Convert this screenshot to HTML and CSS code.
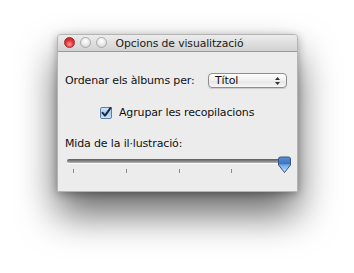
FILE: index.html
```html
<!DOCTYPE html>
<html>
<head>
<meta charset="utf-8">
<link rel="stylesheet" href="styles.css">
</head>
<body>
<div class="window">
  <div class="titlebar">
    <div class="lights">
      <span class="light red"></span>
      <span class="light"></span>
      <span class="light"></span>
    </div>
    <div class="title">Opcions de visualització</div>
  </div>
  <div class="content">
    <div class="row sort">
      <span class="label">Ordenar els àlbums per:</span>
      <div class="popup">
        <span>Títol</span>
        <svg class="arrows" width="5" height="8" viewBox="0 0 5 8"><path d="M2.5 0 L5 3 H0 Z M0 5 H5 L2.5 8 Z" fill="#333"/></svg>
      </div>
    </div>
    <div class="row check">
      <svg class="checkbox" width="12" height="12" viewBox="0 0 12 12">
        <defs>
          <linearGradient id="cb" x1="0" y1="0" x2="0" y2="1">
            <stop offset="0" stop-color="#d6e8f8"/>
            <stop offset="0.5" stop-color="#a9cdee"/>
            <stop offset="1" stop-color="#cfe6fb"/>
          </linearGradient>
        </defs>
        <rect x="0.5" y="0.5" width="11" height="11" rx="1.5" fill="url(#cb)" stroke="#5b7fa8"/>
        <path d="M2.6 5.8 L5 8.6 L10.6 0.8" fill="none" stroke="#1b2a49" stroke-width="2" stroke-linecap="round" stroke-linejoin="round"/>
      </svg>
      <span class="label">Agrupar les recopilacions</span>
    </div>
    <div class="row size">
      <span class="label">Mida de la il·lustració:</span>
    </div>
    <div class="slider">
      <div class="track"></div>
      <svg class="knob" width="15" height="18" viewBox="0 0 15 18">
        <defs>
          <linearGradient id="kb" x1="0" y1="0" x2="0" y2="1">
            <stop offset="0" stop-color="#5a8fd0"/>
            <stop offset="0.45" stop-color="#3b73c4"/>
            <stop offset="0.5" stop-color="#6aa5e6"/>
            <stop offset="1" stop-color="#c5e6ff"/>
          </linearGradient>
        </defs>
        <path d="M1.5 3 Q1.5 1 3.5 1 H11.5 Q13.5 1 13.5 3 V9 L7.5 16.5 L1.5 9 Z" fill="url(#kb)" stroke="#3a5680" stroke-width="1"/>
      </svg>
      <div class="ticks">
        <span></span><span></span><span></span><span></span><span></span>
      </div>
    </div>
  </div>
</div>
</body>
</html>
```
FILE: styles.css
```css
html, body {
  margin: 0;
  padding: 0;
  background: #ffffff;
}
body {
  width: 354px;
  height: 273px;
  overflow: hidden;
  font-family: "DejaVu Sans", "Liberation Sans", sans-serif;
  font-size: 11px;
  letter-spacing: -0.15px;
  color: #111;
}
.window {
  margin: 34px 0 0 57px;
  width: 241px;
  height: 158px;
  background: #ececec;
  box-sizing: border-box;
  border: 1px solid #b4b4b4;
  border-radius: 4px 4px 0 0;
  box-shadow: 0 22px 38px rgba(0,0,0,0.6), 0 2px 8px rgba(0,0,0,0.3);
  display: flex;
  flex-direction: column;
}
.titlebar {
  position: relative;
  height: 16px;
  background: linear-gradient(#ececec, #d2d2d2);
  border-bottom: 1px solid #9a9a9a;
  border-radius: 3px 3px 0 0;
  display: flex;
  align-items: center;
  justify-content: center;
}
.lights {
  position: absolute;
  left: 6px;
  top: 2px;
  display: flex;
  gap: 5px;
}
.light {
  width: 11px;
  height: 11px;
  border-radius: 50%;
  box-sizing: border-box;
  border: 1px solid #a8a8a8;
  background: radial-gradient(circle at 50% 35%, #ffffff 0%, #ececec 45%, #c9c9c9 100%);
}
.light.red {
  border-color: #9b2a2a;
  background: radial-gradient(circle at 50% 70%, #ff9e9e 0%, #e8383c 45%, #b11d22 100%);
}
.title {
  font-size: 10.8px;
  letter-spacing: -0.1px;
  color: #1a1a1a;
  margin-left: 4px;
}
.content {
  flex: 1;
  display: flex;
  flex-direction: column;
  padding: 0 10px 0 7px;
}
.row {
  display: flex;
  align-items: center;
}
.sort {
  margin-top: 21px;
  justify-content: space-between;
}
.popup {
  width: 79px;
  height: 15px;
  box-sizing: border-box;
  border: 1px solid #8e8e8e;
  border-radius: 4px;
  background: linear-gradient(#ffffff, #f0f0f0 50%, #e4e4e4 51%, #f6f6f6);
  display: flex;
  align-items: center;
  justify-content: space-between;
  padding: 0 6px 0 6px;
  box-shadow: 0 1px 1px rgba(0,0,0,0.15);
}
.check {
  margin-top: 18px;
  padding-left: 35px;
  gap: 7px;
}
.checkbox {
  display: block;
}
.size {
  margin-top: 18px;
}
.slider {
  position: relative;
  margin: 9px 0 0 2px;
  width: 221px;
}
.track {
  height: 4px;
  border-radius: 2px;
  background: linear-gradient(#5c5c5c, #8a8a8a 60%, #b8b8b8);
  box-shadow: 0 1px 0 rgba(255,255,255,0.8);
}
.knob {
  position: absolute;
  right: -4px;
  top: -3px;
}
.ticks {
  display: flex;
  justify-content: space-between;
  padding: 0 3px 0 6px;
  margin-top: 6px;
}
.ticks span {
  width: 1px;
  height: 4px;
  background: #8a8a8a;
}
```
